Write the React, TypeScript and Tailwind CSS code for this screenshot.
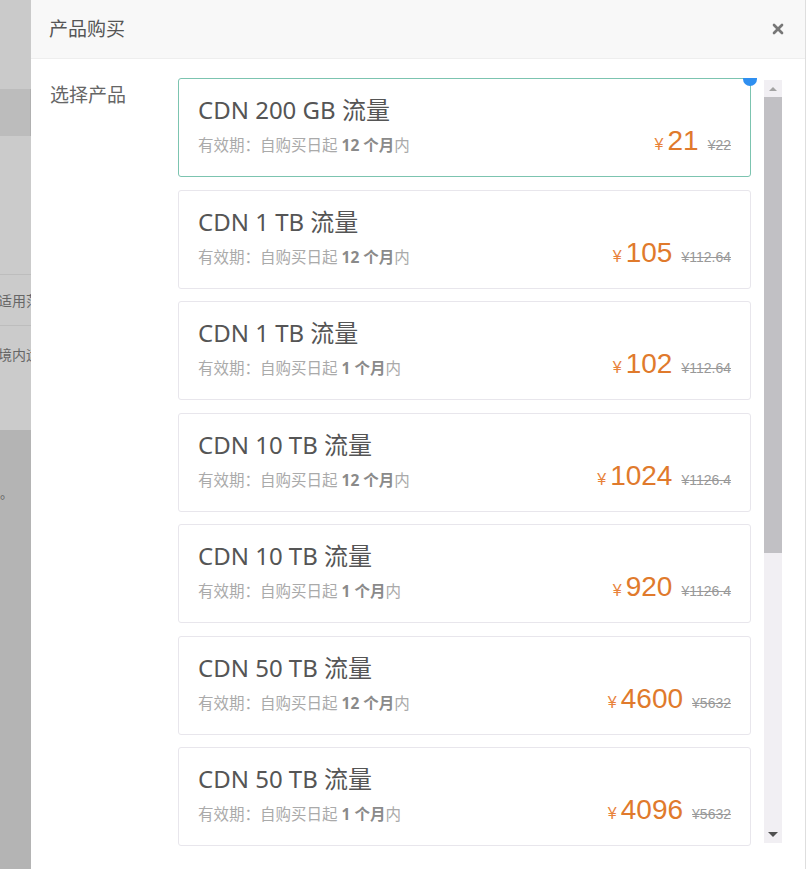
import { X } from "lucide-react";

type Product = {
  name: string;
  months: number;
  price: string;
  origin: string;
};

const products: Product[] = [
  { name: "CDN 200 GB 流量", months: 12, price: "21", origin: "22" },
  { name: "CDN 1 TB 流量", months: 12, price: "105", origin: "112.64" },
  { name: "CDN 1 TB 流量", months: 1, price: "102", origin: "112.64" },
  { name: "CDN 10 TB 流量", months: 12, price: "1024", origin: "1126.4" },
  { name: "CDN 10 TB 流量", months: 1, price: "920", origin: "1126.4" },
  { name: "CDN 50 TB 流量", months: 12, price: "4600", origin: "5632" },
  { name: "CDN 50 TB 流量", months: 1, price: "4096", origin: "5632" },
];

const cjk = "font-['Noto_Sans','Noto_Sans_CJK_SC',sans-serif]";

function ProductCard({ item, active }: { item: Product; active: boolean }) {
  return (
    <div
      className={`relative h-[99px] shrink-0 rounded-[3px] border bg-white px-[19px] pt-[15px] ${
        active ? "border-[#7cc4b0]" : "border-[#e8e6ec]"
      }`}
    >
      {active && (
        <span className="absolute -top-[7px] -right-[7px] h-[14px] w-[14px] rounded-full bg-[#2f8ff0]" />
      )}
      <div className="text-[24px] leading-[32px] text-[#555]">{item.name}</div>
      <div className="flex items-end justify-between">
        <div className="text-[15.5px] leading-[24px] text-[#aaa]">
          有效期：自购买日起{" "}
          <span className="font-bold text-[#8a8a8a]">{item.months} 个月</span>内
        </div>
        {/* 价格 */}
        <div className="flex items-baseline font-['Liberation_Sans',sans-serif]">
          <span className="mr-[4px] text-[16px] text-[#e8823a]">¥</span>
          <span className="text-[28px] leading-[30px] text-[#e07a2c]">{item.price}</span>
          <span className="ml-[9px] text-[14px] text-[#999] line-through">¥{item.origin}</span>
        </div>
      </div>
    </div>
  );
}

function FakeScrollbar() {
  return (
    <div className="mt-[2px] flex h-[763px] w-[18px] flex-col bg-[#f1eff3]">
      <div className="flex h-[17px] items-center justify-center">
        <span className="h-0 w-0 border-x-[4px] border-b-[4px] border-x-transparent border-b-[#a3a3a3]" />
      </div>
      <div className="h-[456px] bg-[#c1c0c4]" />
      <div className="flex-1" />
      <div className="flex h-[17px] items-center justify-center">
        <span className="h-0 w-0 border-x-[5px] border-t-[5px] border-x-transparent border-t-[#505050]" />
      </div>
    </div>
  );
}

export default function App() {
  return (
    <div className={`flex h-[869px] w-[808px] overflow-hidden bg-white ${cjk}`}>
      {/* 背景页面（遮罩后） */}
      <div className="flex w-[31px] shrink-0 flex-col overflow-hidden whitespace-nowrap text-[14px] text-[#666]">
        <div className="h-[89px] bg-[#cacaca]" />
        <div className="h-[47px] border-r border-[#b0b0b0] bg-[#bcbcbc]" />
        <div className="h-[138px] bg-[#cbcbcb]" />
        <div className="flex h-[52px] items-center border-y border-[#bdbdbd] bg-[#cbcbcb] -indent-[2px]">
          适用范
        </div>
        <div className="h-[104px] bg-[#cbcbcb] pt-[18px] -indent-[2px]">境内运</div>
        <div className="flex-1 bg-[#b4b4b4] pt-[54px] text-[13px]">。</div>
      </div>

      {/* 弹窗 */}
      <div className="flex flex-1 flex-col border-r border-[#dedede]">
        <div className="flex h-[59px] shrink-0 items-center justify-between border-b border-[#eeeeee] bg-[#f8f8f8] pl-[18px] pr-[19px]">
          <span className="text-[19px] text-[#555]">产品购买</span>
          <X size={16} strokeWidth={4} className="text-[#777]" />
        </div>

        <div className="flex flex-1 pt-[19px]">
          <div className="w-[147px] shrink-0 pl-[19px] pt-[4px] text-[19px] leading-[26px] text-[#666]">
            选择产品
          </div>
          <div className="flex">
            <div className="flex h-[770px] w-[586px] flex-col gap-[12.5px] overflow-hidden pr-[13px]">
              {products.map((item, idx) => (
                <ProductCard key={idx} item={item} active={idx === 0} />
              ))}
            </div>
            <FakeScrollbar />
          </div>
        </div>
      </div>
      <div className="w-[2px] shrink-0 bg-white" />
    </div>
  );
}
